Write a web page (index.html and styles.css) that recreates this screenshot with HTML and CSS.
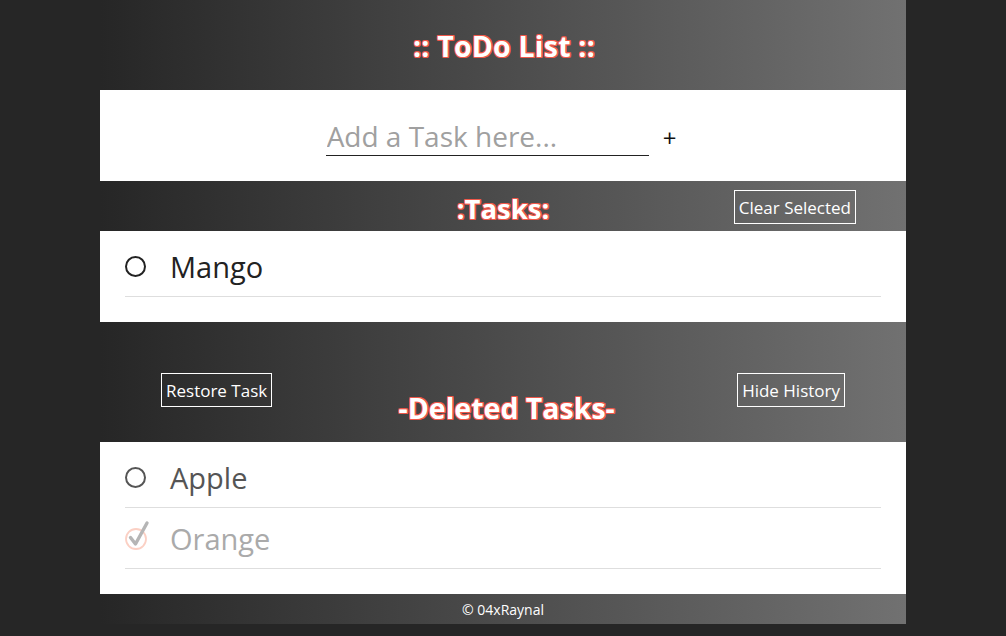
FILE: index.html
```html
<!DOCTYPE html>
<html lang="en">
<head>
<meta charset="utf-8">
<title>ToDo List</title>
<link rel="stylesheet" href="styles.css">
</head>
<body>
<div class="app">
  <header class="bar bar-title">
    <h1 class="glow">:: ToDo List ::</h1>
  </header>
  <section class="panel add-panel">
    <div class="add-row">
      <input class="task-input" type="text" placeholder="Add a Task here...">
      <span class="add-btn">+</span>
    </div>
  </section>
  <div class="bar bar-tasks">
    <h2 class="glow">:Tasks:</h2>
    <button class="ghost-btn clear-btn">Clear Selected</button>
  </div>
  <section class="panel list-panel">
    <ul class="list">
      <li class="item"><span class="circle"></span><span class="label">Mango</span></li>
    </ul>
  </section>
  <div class="bar bar-deleted">
    <button class="ghost-btn">Restore Task</button>
    <h2 class="glow deleted-title">-Deleted Tasks-</h2>
    <button class="ghost-btn">Hide History</button>
  </div>
  <section class="panel deleted-panel">
    <ul class="list">
      <li class="item muted"><span class="circle"></span><span class="label">Apple</span></li>
      <li class="item done">
        <span class="check">
          <svg width="25" height="30" viewBox="0 0 25 30"><circle cx="11" cy="19" r="10" fill="none" stroke="#fbd0c4" stroke-width="1.8"/><path d="M5.5 17.5 L10.5 24 L22 3" fill="none" stroke="#b5b5b5" stroke-width="3.4" stroke-linecap="round" stroke-linejoin="round"/></svg>
        </span>
        <span class="label">Orange</span>
      </li>
    </ul>
  </section>
  <footer class="bar bar-footer">© 04xRaynal</footer>
</div>
</body>
</html>
```
FILE: styles.css
```css
* { box-sizing: border-box; }
html, body { margin: 0; padding: 0; }
body {
  background: #262626;
  font-family: "Open Sans", "Noto Sans", sans-serif;
  height: 636px;
  overflow: hidden;
}
.app {
  width: 806px;
  margin: 0 auto;
}
.bar {
  background: linear-gradient(to right, #262626, #717171);
  color: #fff;
}
.glow {
  margin: 0;
  font-weight: 700;
  color: #fff;
  text-shadow:
    1px 0 0 #f0584a, -1px 0 0 #f0584a, 0 1px 0 #f0584a, 0 -1px 0 #f0584a,
    1px 1px 0 #f0584a, -1px -1px 0 #f0584a, 1px -1px 0 #f0584a, -1px 1px 0 #f0584a;
}
.bar-title {
  height: 90px;
  display: flex;
  align-items: center;
  justify-content: center;
}
.bar-title h1 { font-size: 28.5px; padding-top: 2px; letter-spacing: 0.2px; padding-left: 2px; }
.panel { background: #fff; }
.add-panel {
  height: 91px;
  display: flex;
  align-items: center;
  justify-content: center;
}
.add-row {
  display: flex;
  align-items: center;
  gap: 14px;
  padding-top: 2px;
  padding-right: 4px;
}
.task-input {
  width: 323px;
  border: 0;
  border-bottom: 1px solid #222;
  font-family: inherit;
  font-size: 28px;
  padding: 0 0 0 1px;
  height: 39px;
  outline: none;
  color: #222;
}
.task-input::placeholder { color: #a0a0a0; }
.add-btn { font-size: 24px; color: #111; padding-top: 2px; }
.bar-tasks {
  height: 50px;
  position: relative;
  display: flex;
  align-items: center;
  justify-content: center;
}
.bar-tasks h2 { font-size: 27.5px; padding-top: 4px; }
.ghost-btn {
  background: transparent;
  border: 1px solid #fff;
  color: #fff;
  font-family: inherit;
  font-size: 17px;
  height: 34px;
  padding: 0 4px;
  cursor: pointer;
}
.clear-btn {
  position: absolute;
  right: 50px;
  top: 9px;
}
.list-panel { height: 91px; padding: 5px 25px 0; }
.list { list-style: none; margin: 0; padding: 0; }
.item {
  display: flex;
  align-items: center;
  height: 61px;
  border-bottom: 1px solid #dedede;
  font-size: 29px;
  color: #222;
  padding-top: 1px;
}
.circle {
  width: 21px;
  height: 21px;
  border: 2px solid #222;
  border-radius: 50%;
  margin-right: 24px;
  flex: none;
}
.muted { color: #555; }
.muted .circle { border-color: #555; }
.done { color: #aaa; }
.check { width: 25px; margin-right: 20px; display: flex; margin-top: -8px; }
.bar-deleted {
  height: 120px;
  display: flex;
  justify-content: space-between;
  align-items: flex-start;
  padding: 51px 61px 0 61px;
}
.deleted-title { font-size: 28.5px; padding-top: 16px; padding-left: 4px; }
.deleted-panel { height: 152px; padding: 5px 25px 0; }
.bar-footer {
  height: 30px;
  font-size: 14px;
  display: flex;
  align-items: center;
  justify-content: center;
}
```
